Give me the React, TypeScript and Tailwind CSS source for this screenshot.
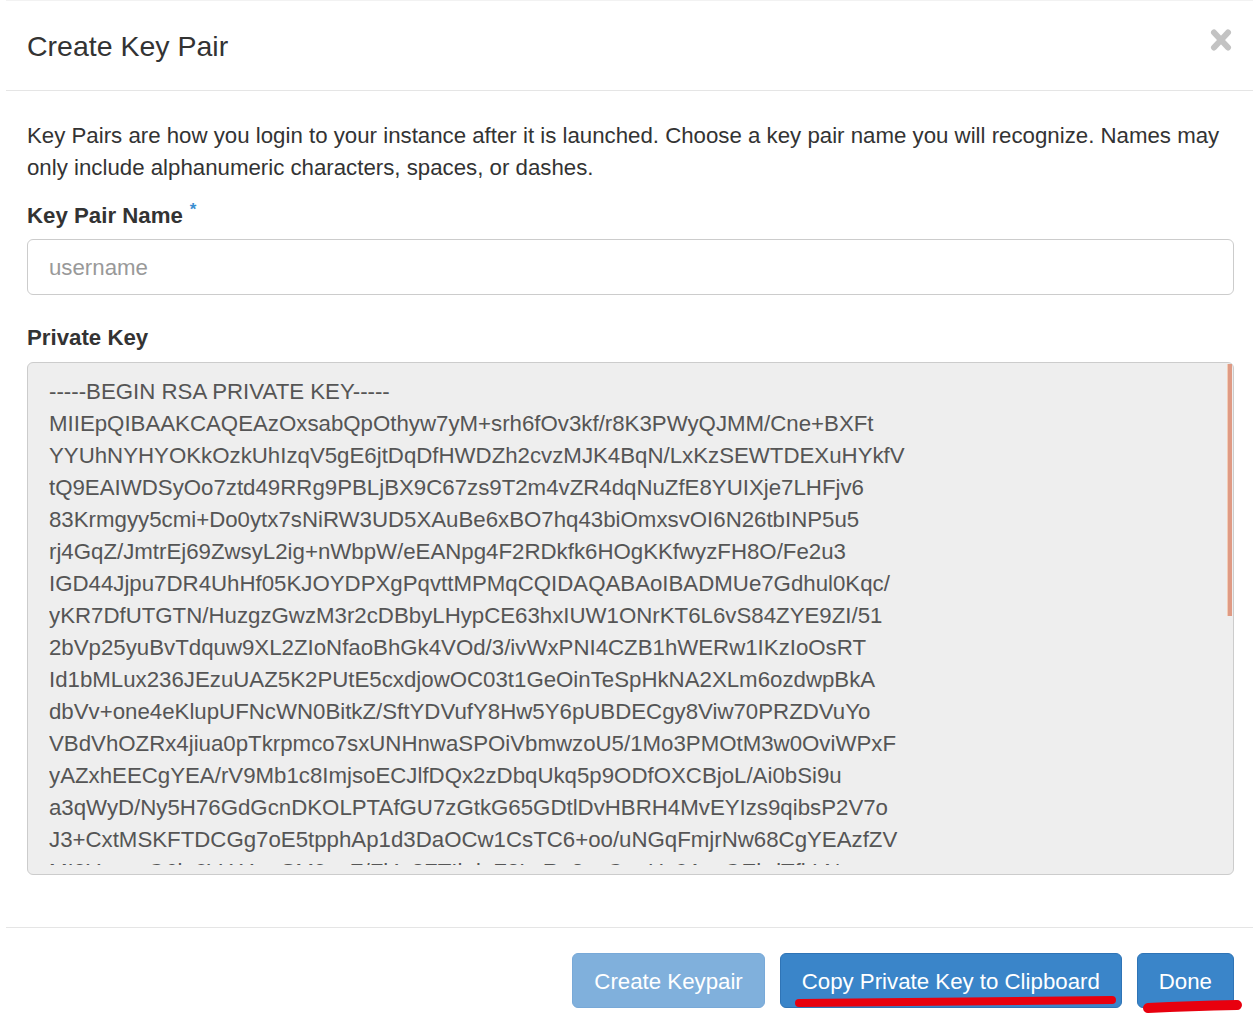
import React from "react";

const keyLines = [
  "-----BEGIN RSA PRIVATE KEY-----",
  "MIIEpQIBAAKCAQEAzOxsabQpOthyw7yM+srh6fOv3kf/r8K3PWyQJMM/Cne+BXFt",
  "YYUhNYHYOKkOzkUhIzqV5gE6jtDqDfHWDZh2cvzMJK4BqN/LxKzSEWTDEXuHYkfV",
  "tQ9EAIWDSyOo7ztd49RRg9PBLjBX9C67zs9T2m4vZR4dqNuZfE8YUIXje7LHFjv6",
  "83Krmgyy5cmi+Do0ytx7sNiRW3UD5XAuBe6xBO7hq43biOmxsvOI6N26tbINP5u5",
  "rj4GqZ/JmtrEj69ZwsyL2ig+nWbpW/eEANpg4F2RDkfk6HOgKKfwyzFH8O/Fe2u3",
  "IGD44Jjpu7DR4UhHf05KJOYDPXgPqvttMPMqCQIDAQABAoIBADMUe7Gdhul0Kqc/",
  "yKR7DfUTGTN/HuzgzGwzM3r2cDBbyLHypCE63hxIUW1ONrKT6L6vS84ZYE9ZI/51",
  "2bVp25yuBvTdquw9XL2ZIoNfaoBhGk4VOd/3/ivWxPNI4CZB1hWERw1IKzIoOsRT",
  "Id1bMLux236JEzuUAZ5K2PUtE5cxdjowOC03t1GeOinTeSpHkNA2XLm6ozdwpBkA",
  "dbVv+one4eKlupUFNcWN0BitkZ/SftYDVufY8Hw5Y6pUBDECgy8Viw70PRZDVuYo",
  "VBdVhOZRx4jiua0pTkrpmco7sxUNHnwaSPOiVbmwzoU5/1Mo3PMOtM3w0OviWPxF",
  "yAZxhEECgYEA/rV9Mb1c8ImjsoECJlfDQx2zDbqUkq5p9ODfOXCBjoL/Ai0bSi9u",
  "a3qWyD/Ny5H76GdGcnDKOLPTAfGU7zGtkG65GDtlDvHBRH4MvEYIzs9qibsP2V7o",
  "J3+CxtMSKFTDCGg7oE5tpphAp1d3DaOCw1CsTC6+oo/uNGqFmjrNw68CgYEAzfZV",
  "MI9YwmaO6iu0VrX4aoSM9ozZ/Fj4x8FTIkdaF3LsRe2exCquUc0AyvOEbdTfkLN",
];

function CloseIcon() {
  return (
    <svg width="22" height="24" viewBox="0 0 22 24" aria-hidden="true">
      <path
        d="M4 4.5 L18 19.5 M18 4.5 L4 19.5"
        stroke="#c3c3c3"
        strokeWidth="6"
        strokeLinecap="round"
      />
    </svg>
  );
}

export default function App() {
  return (
    <div
      className="relative min-h-screen bg-white text-[#333] pl-[6px]"
      style={{ fontFamily: '"Liberation Sans", Arial, Helvetica, sans-serif' }}
    >
      <div className="border-t border-[#f2f2f2]">
        {/* Header */}
        <div className="flex items-start justify-between pl-[21px] pr-[21px] pt-[25px] pb-[24px] border-b border-[#e5e5e5]">
          <h4 className="text-[28.5px] leading-[40px] font-normal text-[#333]">
            Create Key Pair
          </h4>
          <button className="mt-[2px]" aria-label="Close">
            <CloseIcon />
          </button>
        </div>

        {/* Body */}
        <div className="pl-[21px] pr-[19px] pt-[29px] pb-[52px] text-[22.25px]">
          <p className="leading-[32px] mb-[16px]">
            Key Pairs are how you login to your instance after it is launched.
            Choose a key pair name you will recognize. Names may only include
            alphanumeric characters, spaces, or dashes.
          </p>

          <div className="mb-[27px]">
            <label className="block font-bold leading-[32px] mb-[7px]">
              Key Pair Name
              <span className="ml-[7px] align-top text-[17px] leading-[20px] text-[#3b8ed1]">
                *
              </span>
            </label>
            <div className="flex items-center h-[56px] pt-[2px] border border-[#cccccc] rounded-[6px] bg-white pl-[21px] text-[#999]">
              username
            </div>
          </div>

          <div>
            <label className="block font-bold leading-[32px] mb-[8px]">
              Private Key
            </label>
            <div className="relative h-[513px] border border-[#cccccc] rounded-[6px] bg-[#eeeeee] pl-[21px] pt-[13px] pb-[9px]">
              <div className="h-full overflow-hidden text-[#555] leading-[32px] whitespace-pre">
                {keyLines.map((line) => (
                  <div key={line}>{line}</div>
                ))}
              </div>
              {/* scrollbar thumb */}
              <div className="absolute right-[1px] top-[1px] w-[5px] h-[252px] bg-[#df9a84] border-l border-[#f3cdb6]" />
            </div>
          </div>
        </div>

        {/* Footer */}
        <div className="flex justify-end gap-[15px] pl-[21px] pr-[19px] pt-[25px] pb-[20px] border-t border-[#e5e5e5] text-[22.25px]">
          <button className="flex items-center h-[55px] pt-[3px] px-[21px] rounded-[6px] border border-[#78a9d8] bg-[#80b0dc] text-white">
            Create Keypair
          </button>
          <button className="flex items-center h-[55px] pt-[3px] px-[21px] rounded-[6px] border border-[#2f74b6] bg-[#3a85c9] text-white">
            Copy Private Key to Clipboard
          </button>
          <button className="flex items-center h-[55px] pt-[3px] px-[21px] rounded-[6px] border border-[#2f74b6] bg-[#3a85c9] text-white">
            Done
          </button>
        </div>
      </div>

      {/* red marker strokes under the buttons */}
      <svg
        className="absolute left-0 top-0 pointer-events-none"
        width="1253"
        height="1013"
        viewBox="0 0 1253 1013"
      >
        <path
          d="M799 1003 Q950 1002 1112 1000"
          stroke="#e8000e"
          strokeWidth="8"
          strokeLinecap="round"
          fill="none"
        />
        <path
          d="M1148 1008 Q1190 1006 1237 1005"
          stroke="#e8000e"
          strokeWidth="10"
          strokeLinecap="round"
          fill="none"
        />
      </svg>
    </div>
  );
}
